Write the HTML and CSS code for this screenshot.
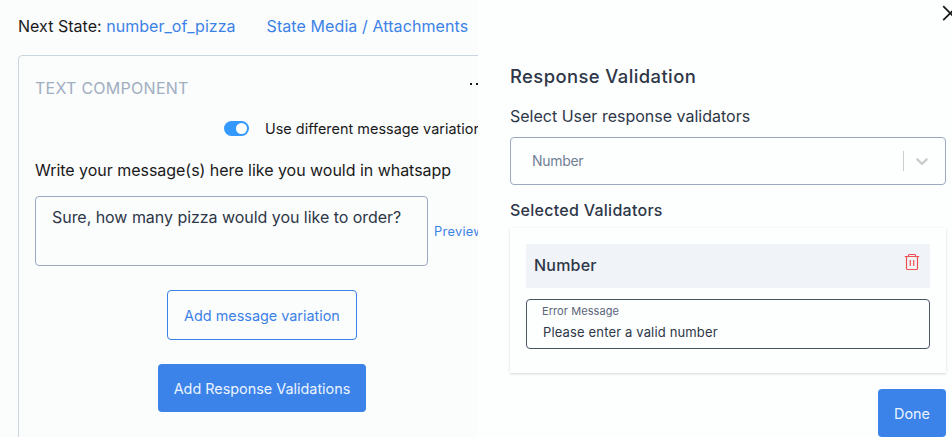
FILE: index.html
```html
<!DOCTYPE html>
<html lang="en">
<head>
<meta charset="utf-8">
<title>Response Validation</title>
<link rel="stylesheet" href="styles.css">
</head>
<body>
<div class="app">
  <main class="editor">
    <div class="state-row">
      <div class="next-state">Next State: <a class="link">number_of_pizza</a></div>
      <a class="link media-link">State Media / Attachments</a>
    </div>
    <section class="component">
      <header class="component-head">
        <h2 class="component-title">TEXT COMPONENT</h2>
        <div class="dots"><i></i><i></i><i></i></div>
      </header>
      <div class="toggle-row">
        <span class="switch"><span class="knob"></span></span>
        <span class="toggle-label">Use different message variations</span>
      </div>
      <p class="prompt">Write your message(s) here like you would in whatsapp</p>
      <div class="message-row">
        <div class="message">Sure, how many pizza would you like to order?</div>
        <a class="link preview">Preview</a>
      </div>
      <div class="actions">
        <button class="btn btn-outline">Add message variation</button>
        <button class="btn btn-primary btn-wide">Add Response Validations</button>
      </div>
    </section>
  </main>
  <aside class="drawer">
    <div class="drawer-top">
      <svg class="close" width="17" height="17" viewBox="0 0 17 17"><path d="M1.2 1.2 15.2 15.2M15.2 1.2 1.2 15.2"/></svg>
    </div>
    <h1 class="title">Response Validation</h1>
    <p class="label">Select User response validators</p>
    <div class="select">
      <span class="select-value">Number</span>
      <span class="separator"></span>
      <svg class="chevron" width="20" height="20" viewBox="0 0 20 20"><path d="M4.516 7.548c0.436-0.446 1.043-0.481 1.576 0l3.908 3.747 3.908-3.747c0.533-0.481 1.141-0.446 1.574 0 0.436 0.445 0.408 1.197 0 1.615-0.406 0.418-4.695 4.502-4.695 4.502-0.217 0.223-0.502 0.335-0.787 0.335s-0.57-0.112-0.789-0.335c0 0-4.287-4.084-4.695-4.502s-0.436-1.17 0-1.615z"/></svg>
    </div>
    <h3 class="subtitle">Selected Validators</h3>
    <div class="card">
      <div class="card-head">
        <span class="card-name">Number</span>
        <svg class="trash" width="16" height="18" viewBox="0 0 16 18"><path d="M.8 3.500H15.200M4.500 3.200V2.200Q4.500 1.500 5.500 1.500H10.500Q11.500 1.500 11.500 2.200V3.200M2.500 3.500V15.500Q2.500 16.500 3.500 16.500H12.500Q13.500 16.500 13.500 15.500V3.500M6.300 7V13M9.700 7V13"/></svg>
      </div>
      <div class="field">
        <span class="field-label">Error Message</span>
        <span class="field-value">Please enter a valid number</span>
      </div>
    </div>
    <div class="drawer-foot">
      <button class="btn btn-primary btn-done">Done</button>
    </div>
  </aside>
</div>
</body>
</html>
```

FILE: styles.css
```css
* { box-sizing: border-box; }
body {
  margin: 0;
  overflow: hidden;
  font-family: Inter, "Liberation Sans", sans-serif;
  font-size: 16px;
  line-height: 24px;
  color: #1a1a1a;
  background: #fcfdfd;
}
h1, h2, h3, p { margin: 0; }
.app { display: flex; width: 952px; height: 437px; }
.editor {
  flex: 0 0 478px;
  overflow: hidden;
  padding: 14px 0 0 18px;
  background: #fbfcfc;
  white-space: nowrap;
}
.link { color: #3b82e7; }
.state-row { display: flex; gap: 31px; height: 41px; letter-spacing: .03px; }
.media-link { letter-spacing: .09px; }
.component {
  width: 488px;
  height: 420px;
  padding: 20px 16px;
  border: 1px solid #cbd5e0;
  border-radius: 4px;
}
.component-head { display: flex; height: 40px; }
.component-title {
  width: 435px;
  font-size: 16px;
  font-weight: 400;
  letter-spacing: .27px;
  color: #a0aec0;
}
.dots { display: flex; gap: 4px; padding-top: 7px; }
.dots i { width: 2px; height: 2px; background: #1a1a1a; }
.toggle-row {
  display: flex;
  align-items: center;
  gap: 16px;
  height: 24px;
  padding-left: 189px;
}
.switch {
  display: flex;
  flex: none;
  justify-content: flex-end;
  width: 25px;
  height: 15px;
  padding: 2px;
  border-radius: 8px;
  background: #3399ff;
}
.knob { width: 11px; height: 11px; border-radius: 50%; background: #fff; }
.toggle-label { padding-top: 1px; font-size: 14.4px; letter-spacing: .03px; }
.prompt { margin-top: 18px; letter-spacing: -.03px; }
.message-row { display: flex; align-items: center; gap: 6px; margin-top: 14px; }
.message {
  width: 393px;
  height: 70px;
  padding: 8px 16px;
  border: 1px solid #9aaac2;
  border-radius: 4px;
  letter-spacing: -.04px;
  color: #2d3748;
}
.preview { padding-top: 1px; font-size: 12.8px; letter-spacing: .3px; }
.actions {
  display: flex;
  flex-direction: column;
  align-items: center;
  gap: 24px;
  width: 454px;
  padding-top: 24px;
}
.btn {
  height: 48px;
  padding: 2px 0 0;
  border: 0;
  border-radius: 4px;
  font: 400 14.4px/24px Inter, "Liberation Sans", sans-serif;
}
.btn-outline { width: 190px; height: 50px; border: 1px solid #3b82e7; color: #3b82e7; background: transparent; }
.btn-primary { color: #ebf4ff; background: #3b82e9; }
.btn-wide { width: 208px; }
.btn-done { width: 68px; }
.drawer { flex: 0 0 474px; padding: 0 6px 0 32px; color: #2d3748; background: #fdfefe; }
.drawer-top { display: flex; justify-content: flex-end; height: 62px; padding-top: 5px; margin-right: -13px; }
.close { flex: none; fill: none; stroke: #1a1a1a; stroke-width: 1.8; }
.title { font-size: 18.4px; line-height: 28px; font-weight: 500; letter-spacing: .42px; }
.label { margin-top: 14px; }
.select {
  display: flex;
  align-items: center;
  height: 48px;
  margin-top: 9px;
  padding: 0 13px 0 21px;
  border: 1px solid #9aaac2;
  border-radius: 4px;
}
.select-value { flex: 1; font-size: 14px; letter-spacing: -.3px; color: #718096; }
.separator { width: 1px; height: 20px; margin-right: 8px; background: #ccc; }
.chevron { fill: #ccc; }
.subtitle { margin-top: 13px; font-size: 16px; font-weight: 500; letter-spacing: .27px; }
.card {
  height: 145px;
  margin-top: 6px;
  padding: 16px;
  box-shadow: 0 1px 3px rgba(0, 0, 0, .1), 0 1px 2px rgba(0, 0, 0, .06);
}
.card-head {
  display: flex;
  justify-content: space-between;
  height: 44px;
  padding: 9px 10px 0 8px;
  background: #f0f3f8;
}
.card-name { font-weight: 500; letter-spacing: .2px; }
.trash { fill: none; stroke: #f05252; stroke-width: 1.2; }
.field {
  display: flex;
  flex-direction: column;
  height: 50px;
  margin-top: 11px;
  padding: 3px 15px;
  border: 1px solid #4a5568;
  border-radius: 4px;
}
.field-label { font-size: 11px; line-height: 17px; letter-spacing: .08px; color: #5a6578; }
.field-value { padding-left: 1px; font-size: 13px; line-height: 24px; letter-spacing: .15px; }
.drawer-foot { display: flex; justify-content: flex-end; margin-top: 16px; }
```
